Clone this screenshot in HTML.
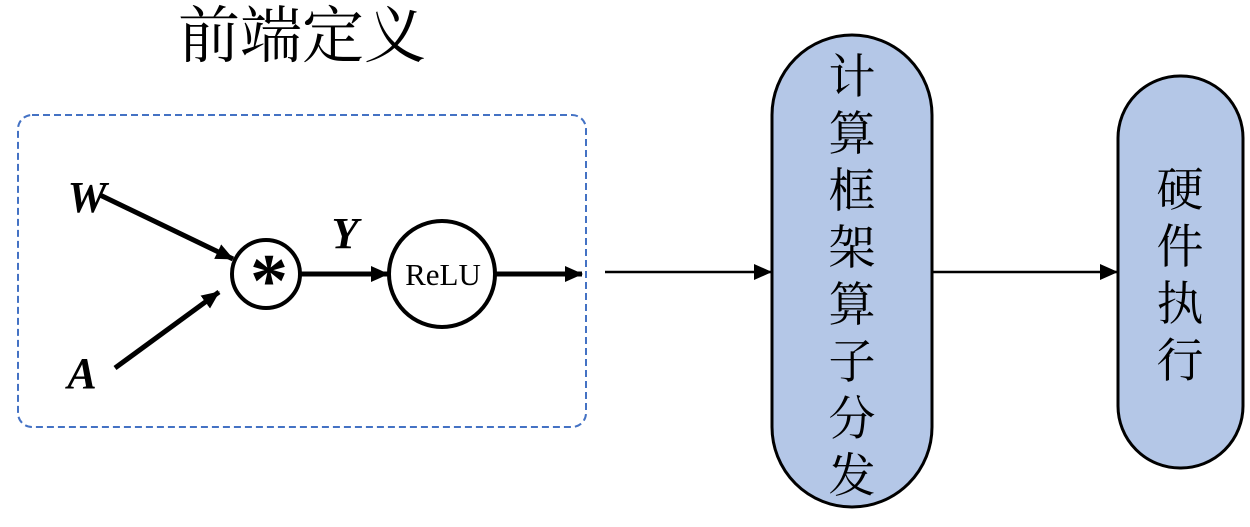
<!DOCTYPE html>
<html><head><meta charset="utf-8"><style>
body{margin:0;width:1250px;height:522px;background:#fff;overflow:hidden}
</style></head><body>
<svg width="1250" height="522" viewBox="0 0 1250 522" xmlns="http://www.w3.org/2000/svg">
<defs>
<marker id="ah2" markerWidth="18" markerHeight="16" refX="17" refY="8" orient="auto" markerUnits="userSpaceOnUse">
<path d="M0,0 L18,8 L0,16 Z" fill="#000"/></marker>
</defs>
<text x="302" y="57" font-family="'Noto Serif CJK SC','Liberation Serif',serif" font-size="62" text-anchor="middle">前端定义</text>
<rect x="18" y="115" width="568" height="312" rx="14" fill="none" stroke="#4472c4" stroke-width="2" stroke-dasharray="7,4"/>
<text x="87" y="212" font-family="'Liberation Serif',serif" font-size="44" font-weight="bold" font-style="italic" text-anchor="middle">W</text>
<text x="82" y="388" font-family="'Liberation Serif',serif" font-size="44" font-weight="bold" font-style="italic" text-anchor="middle">A</text>
<text x="345" y="248" font-family="'Liberation Serif',serif" font-size="44" font-weight="bold" font-style="italic" text-anchor="middle">Y</text>
<line x1="100" y1="195" x2="233" y2="259" stroke="#000" stroke-width="5" marker-end="url(#ah2)"/>
<line x1="115" y1="368" x2="219" y2="292" stroke="#000" stroke-width="5" marker-end="url(#ah2)"/>
<circle cx="266" cy="274" r="34" fill="none" stroke="#000" stroke-width="4"/>
<text x="269" y="306" font-family="'Liberation Serif',serif" font-size="76" font-weight="bold" text-anchor="middle">*</text>
<line x1="300" y1="274" x2="388" y2="274" stroke="#000" stroke-width="5" marker-end="url(#ah2)"/>
<circle cx="442" cy="274" r="53" fill="none" stroke="#000" stroke-width="4"/>
<text x="443" y="285" font-family="'Liberation Serif',serif" font-size="31" text-anchor="middle">ReLU</text>
<line x1="496" y1="274" x2="582" y2="274" stroke="#000" stroke-width="5" marker-end="url(#ah2)"/>
<line x1="605" y1="272" x2="771" y2="272" stroke="#000" stroke-width="2.5" marker-end="url(#ah2)"/>
<rect x="772" y="35" width="160" height="472" rx="80" fill="#b4c7e7" stroke="#000" stroke-width="3"/>
<line x1="932" y1="272" x2="1117" y2="272" stroke="#000" stroke-width="2.5" marker-end="url(#ah2)"/>
<rect x="1118" y="76" width="125" height="392" rx="62" fill="#b4c7e7" stroke="#000" stroke-width="3"/>
<g font-family="'Noto Serif CJK SC','Liberation Serif',serif" font-size="47" text-anchor="middle">
<text x="852" y="93">计</text>
<text x="852" y="150">算</text>
<text x="852" y="207">框</text>
<text x="852" y="264">架</text>
<text x="852" y="321">算</text>
<text x="852" y="378">子</text>
<text x="852" y="435">分</text>
<text x="852" y="492">发</text>
<text x="1180" y="206">硬</text>
<text x="1180" y="263">件</text>
<text x="1180" y="320">执</text>
<text x="1180" y="377">行</text>
</g>
</svg>
</body></html>
